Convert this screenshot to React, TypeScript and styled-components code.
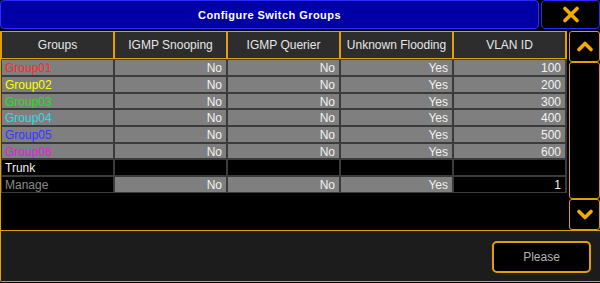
import React from "react";
import styled, { createGlobalStyle } from "styled-components";

const ORANGE = "#e2a000";
const ICON = "#f4aa00";

const Global = createGlobalStyle`
  html, body { margin: 0; padding: 0; background: #000; }
  body { font-family: "Liberation Sans", Arial, sans-serif; }
  * { box-sizing: border-box; }
`;

const Screen = styled.div`
  width: 600px;
  height: 283px;
  background: #000;
  display: flex;
  flex-direction: column;
  overflow: hidden;
`;

const TitleRow = styled.div`
  display: flex;
  height: 29px;
  gap: 2px;
  margin-bottom: 2px;
`;

const TitleBar = styled.div`
  flex: 1;
  background: #0000a6;
  border: 1px solid #2b2bff;
  border-radius: 4px;
  display: flex;
  align-items: center;
  justify-content: center;
  color: #fff;
  font-weight: bold;
  font-size: 11px;
  letter-spacing: 0.45px;
`;

const CloseButton = styled.div`
  width: 59px;
  background: #000;
  border: 1px solid #2b2bff;
  border-radius: 4px;
  display: flex;
  align-items: center;
  justify-content: center;
`;

const Middle = styled.div`
  display: flex;
  height: 199px;
  gap: 2px;
`;

const TablePanel = styled.div`
  width: 567px;
  border-left: 1px solid ${ORANGE};
  background: #000;
  display: flex;
  flex-direction: column;
`;

const HeaderGrid = styled.div`
  display: grid;
  grid-template-columns: repeat(5, 111px);
  gap: 2px;
  padding: 1px;
  height: 28px;
  width: 566px;
  background: ${ORANGE};
`;

const HeadCell = styled.div`
  background: #2d2d2d;
  color: #e6e6e6;
  font-size: 12px;
  display: flex;
  align-items: center;
  justify-content: center;
`;

const BodyGrid = styled.div`
  display: grid;
  grid-template-columns: repeat(5, 111px);
  grid-template-rows: 15px 15px 14px 15px 15px 14px 15px 15px;
  gap: 2px;
  padding: 1px;
  width: 566px;
  background: #3b3b3b;
`;

const Cell = styled.div<{ $bg: "gray" | "black"; $color: string; $align: "left" | "right" }>`
  background: ${(p) => (p.$bg === "gray" ? "#7f7f7f" : "#000")};
  color: ${(p) => p.$color};
  font-size: 12px;
  line-height: 16px;
  white-space: nowrap;
  overflow: hidden;
  text-align: ${(p) => p.$align};
  padding: ${(p) => (p.$align === "left" ? "0 0 0 3px" : "0 4px 0 0")};
`;

const ScrollCol = styled.div`
  width: 31px;
  display: flex;
  flex-direction: column;
`;

const ScrollBtn = styled.div<{ $h: number }>`
  height: ${(p) => p.$h}px;
  border: 1px solid ${ORANGE};
  border-radius: 3px;
  background: #000;
  display: flex;
  align-items: center;
  justify-content: center;
`;

const Bottom = styled.div`
  height: 52px;
  border-top: 1px solid ${ORANGE};
  border-left: 1px solid ${ORANGE};
  border-bottom: 1px solid ${ORANGE};
  border-radius: 0 0 0 2px;
  background: #1c1c1c;
  display: flex;
  justify-content: flex-end;
  padding: 10px 9px 0 0;
`;

const PleaseButton = styled.div`
  width: 99px;
  height: 32px;
  border: 2px solid ${ORANGE};
  border-radius: 5px;
  background: #000;
  color: #b4b4b4;
  font-size: 12px;
  display: flex;
  align-items: center;
  justify-content: center;
`;

type Row = {
  name: string;
  color: string;
  nameBg: "gray" | "black";
  vals: (string | null)[];
  bgs: ("gray" | "black")[];
};

const groups: [string, string][] = [
  ["Group01", "#ff2a2a"],
  ["Group02", "#ffff00"],
  ["Group03", "#22e022"],
  ["Group04", "#22e0e0"],
  ["Group05", "#3535ff"],
  ["Group06", "#e020e0"],
];

const rows: Row[] = [
  ...groups.map(([n, c], i) => ({
    name: n,
    color: c,
    nameBg: "gray" as const,
    vals: ["No", "No", "Yes", String((i + 1) * 100)],
    bgs: ["gray", "gray", "gray", "gray"] as ("gray" | "black")[],
  })),
  {
    name: "Trunk",
    color: "#f0f0f0",
    nameBg: "black",
    vals: [null, null, null, null],
    bgs: ["black", "black", "black", "black"],
  },
  {
    name: "Manage",
    color: "#8a8a8a",
    nameBg: "black",
    vals: ["No", "No", "Yes", "1"],
    bgs: ["gray", "gray", "gray", "black"],
  },
];

const headers = ["Groups", "IGMP Snooping", "IGMP Querier", "Unknown Flooding", "VLAN ID"];

const Chevron = ({ up }: { up: boolean }) => (
  <svg width="18" height="11" viewBox="0 0 18 11">
    <polyline
      points={up ? "3,8.5 9,2.5 15,8.5" : "3,2.5 9,8.5 15,2.5"}
      fill="none"
      stroke={ICON}
      strokeWidth="3.6"
      strokeLinecap="round"
      strokeLinejoin="round"
    />
  </svg>
);

const CloseIcon = () => (
  <svg width="18" height="17" viewBox="0 0 18 17">
    <g stroke={ICON} strokeWidth="3.6" strokeLinecap="round">
      <line x1="3" y1="2.5" x2="15" y2="14.5" />
      <line x1="15" y1="2.5" x2="3" y2="14.5" />
    </g>
  </svg>
);

export default function App() {
  return (
    <Screen>
      <Global />
      <TitleRow>
        <TitleBar>Configure Switch Groups</TitleBar>
        <CloseButton>
          <CloseIcon />
        </CloseButton>
      </TitleRow>
      <Middle>
        <TablePanel>
          <HeaderGrid>
            {headers.map((h) => (
              <HeadCell key={h}>{h}</HeadCell>
            ))}
          </HeaderGrid>
          <BodyGrid>
            {rows.map((r) => (
              <React.Fragment key={r.name}>
                <Cell $bg={r.nameBg} $color={r.color} $align="left">
                  {r.name}
                </Cell>
                {r.vals.map((v, i) => (
                  <Cell key={i} $bg={r.bgs[i]} $color="#f2f2f2" $align="right">
                    {v}
                  </Cell>
                ))}
              </React.Fragment>
            ))}
          </BodyGrid>
        </TablePanel>
        <ScrollCol>
          <ScrollBtn $h={31}>
            <Chevron up />
          </ScrollBtn>
          <ScrollBtn $h={137} />
          <ScrollBtn $h={31}>
            <Chevron up={false} />
          </ScrollBtn>
        </ScrollCol>
      </Middle>
      <Bottom>
        <PleaseButton>Please</PleaseButton>
      </Bottom>
    </Screen>
  );
}
